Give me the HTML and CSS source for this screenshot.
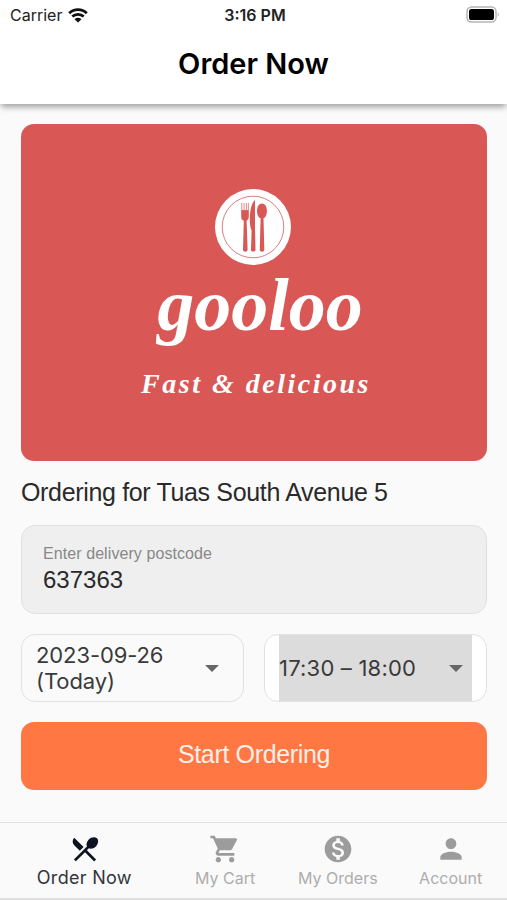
FILE: index.html
```html
<!DOCTYPE html>
<html lang="en">
<head>
    <meta charset="UTF-8">
    <meta name="viewport" content="width=device-width, initial-scale=1.0">
    <title>Order Now</title>
    <link rel="stylesheet" href="styles.css">
</head>
<body>
    <header class="header">
        <div class="status-bar">
            <div class="carrier">
                <span>Carrier</span>
                <svg class="wifi" viewBox="0 0 20 15" width="20" height="15">
                    <path d="M1.2 5.3a12.6 12.6 0 0 1 17.6 0M4.3 8.6a8.2 8.2 0 0 1 11.4 0" fill="none" stroke="#111" stroke-width="2.8"/>
                    <path d="M10 14.6 6.5 11.2a5 5 0 0 1 7 0z" fill="#111"/>
                </svg>
            </div>
            <div class="time">3:16 PM</div>
            <svg class="battery" viewBox="0 0 34 17" width="34" height="17">
                <rect x="1" y="1" width="29" height="15" rx="4.5" fill="#fff" stroke="#b5b5b5" stroke-width="1.5"/>
                <rect x="3" y="3" width="25" height="11" rx="2.6" fill="#000"/>
                <path d="M31.7 6.5v4.2c1.6-.7 1.6-3.5 0-4.2z" fill="#b5b5b5"/>
            </svg>
        </div>
        <h1>Order Now</h1>
    </header>

    <main class="content">
        <div class="banner">
            <svg class="plate" viewBox="0 0 76 76" width="76" height="76">
                <circle cx="38" cy="38" r="38" fill="#fff"/>
                <circle cx="38" cy="38" r="30.8" fill="none" stroke="#da8080" stroke-width="1"/>
                <g fill="#d95755">
                    <path d="M26.2 21h7.600v6.500c0 2.200-1 3.500-2.200 4.300l1 29c0 2.500-4.600 2.500-4.600 0l.8-29c-2.200-.8-2.600-2.100-2.600-4.300z"/>
                    <path d="M40 11v29l.5 21c0 2-4.500 2-4.500 0l.6-19.500C33.500 34 34.500 15 40 11z"/>
                    <path d="M47 14.500c6.200 0 6.500 13 1.500 14.800l.8 31.500c0 2.500-4.500 2.500-4.500 0l.8-31.500c-5-1.800-4.800-14.800 1.400-14.800z"/>
                </g>
                <path d="M26.800 14v8M29.100 14v8M31.400 14v8M33.400 14v8" stroke="#df7e7c" stroke-width=".9"/>
            </svg>
            <div class="brand">gooloo</div>
            <div class="tagline">Fast &amp; delicious</div>
        </div>

        <h2>Ordering for Tuas South Avenue 5</h2>

        <div class="postcode">
            <div class="postcode-label">Enter delivery postcode</div>
            <div class="postcode-value">637363</div>
        </div>

        <div class="selects">
            <div class="select">
                <div class="select-inner">
                    <span class="date">2023-09-26<br>(Today)</span>
                    <span class="arrow"></span>
                </div>
            </div>
            <div class="select select-time">
                <div class="select-inner">
                    <span class="slot">17:30 – 18:00</span>
                    <span class="arrow"></span>
                </div>
            </div>
        </div>

        <button class="btn">Start Ordering</button>
    </main>

    <nav class="tabs">
        <div class="tab active">
            <svg viewBox="0 0 24 24" width="32" height="32"><path d="M8.100 13.340l2.830-2.830L3.910 3.500c-1.560 1.560-1.560 4.090 0 5.660l4.190 4.180zm6.780-1.810c1.530.71 3.680.21 5.270-1.380 1.910-1.910 2.280-4.650.81-6.120-1.460-1.460-4.200-1.100-6.120.81-1.590 1.590-2.090 3.740-1.380 5.270L3.700 19.870l1.410 1.410L12 14.410l6.880 6.880 1.410-1.410L13.410 13l1.470-1.470z"/></svg>
            <span>Order Now</span>
        </div>
        <div class="tab cart">
            <svg viewBox="0 0 24 24" width="32" height="32"><path d="M7 18c-1.100 0-1.990.9-1.990 2S5.900 22 7 22s2-.9 2-2-.9-2-2-2zM1 2v2h2l3.600 7.590-1.350 2.450c-.16.28-.25.61-.25.96 0 1.100.9 2 2 2h12v-2H7.420c-.14 0-.25-.11-.25-.25l.03-.12.900-1.630h7.450c.75 0 1.410-.41 1.750-1.030l3.580-6.490c.08-.14.12-.31.12-.48 0-.55-.45-1-1-1H5.210l-.94-2H1zm16 16c-1.100 0-1.990.9-1.990 2s.89 2 1.990 2 2-.9 2-2-.9-2-2-2z"/></svg>
            <span>My Cart</span>
        </div>
        <div class="tab orders">
            <svg viewBox="0 0 24 24" width="32" height="32"><path d="M12 2C6.480 2 2 6.480 2 12s4.480 10 10 10 10-4.480 10-10S17.520 2 12 2zm1.410 16.090V20h-2.670v-1.930c-1.710-.36-3.160-1.460-3.270-3.400h1.960c.1 1.050.82 1.870 2.650 1.870 1.960 0 2.400-.98 2.400-1.590 0-.83-.44-1.610-2.670-2.140-2.480-.6-4.180-1.620-4.180-3.670 0-1.720 1.390-2.840 3.110-3.210V4h2.670v1.950c1.860.45 2.790 1.860 2.850 3.390H14.300c-.05-1.110-.64-1.870-2.220-1.870-1.500 0-2.400.68-2.400 1.640 0 .84.65 1.390 2.670 1.910s4.180 1.390 4.180 3.910c-.01 1.830-1.380 2.830-3.120 3.160z"/></svg>
            <span>My Orders</span>
        </div>
        <div class="tab account">
            <svg viewBox="0 0 24 24" width="32" height="32"><path d="M12 12c2.210 0 4-1.790 4-4s-1.790-4-4-4-4 1.790-4 4 1.790 4 4 4zm0 2c-2.670 0-8 1.340-8 4v2h16v-2c0-2.660-5.330-4-8-4z"/></svg>
            <span>Account</span>
        </div>
    </nav>
</body>
</html>
```

FILE: styles.css
```css
* {
    box-sizing: border-box;
}

body {
    width: 507px;
    height: 900px;
    margin: 0;
    display: flex;
    flex-direction: column;
    overflow: hidden;
    background: #fafafa;
    color: #2a2a2a;
    font-family: "Liberation Sans", Arial, sans-serif;
}

.header {
    height: 104px;
    background: #ffffff;
    box-shadow: 0 4px 6px -1px rgba(0, 0, 0, 0.36);
}

.status-bar {
    height: 30px;
    padding: 0 7px 0 10px;
    display: grid;
    grid-template-columns: 1fr auto 1fr;
    align-items: center;
    font-family: Inter, sans-serif;
    font-size: 16px;
    color: #222222;
}

.carrier {
    display: flex;
    align-items: center;
    gap: 6px;
}

.time {
    font-weight: 600;
    font-size: 16px;
}

.battery {
    justify-self: end;
    margin-bottom: 2px;
}

.header h1 {
    margin: 16px 0 0;
    font-family: Inter, sans-serif;
    font-weight: 600;
    font-size: 29px;
    line-height: 36px;
    text-align: center;
    color: #000000;
}

.content {
    flex: 1;
    padding: 20px 20px 0 21px;
}

.banner {
    height: 337px;
    padding-top: 65px;
    display: flex;
    flex-direction: column;
    align-items: center;
    border-radius: 13px;
    background: #d95755;
    color: #ffffff;
    font-family: "Liberation Serif", serif;
    font-style: italic;
    font-weight: bold;
}

.plate {
    flex: none;
    margin-right: 2px;
}

.brand {
    padding-left: 12px;
    font-size: 74px;
    line-height: 80px;
}

.tagline {
    margin-top: 19px;
    padding-left: 4px;
    font-size: 28px;
    line-height: 40px;
    letter-spacing: 2.5px;
}

.content h2 {
    margin: 16px 0 0;
    font-size: 25px;
    line-height: 30px;
    font-weight: normal;
    letter-spacing: -0.34px;
}

.postcode {
    height: 89px;
    margin-top: 18px;
    padding: 17px 21px;
    border: 1px solid #e0e0e0;
    border-radius: 14px;
    background: #efefef;
}

.postcode-label {
    font-size: 16px;
    line-height: 22px;
    letter-spacing: 0.08px;
    color: #888888;
}

.postcode-value {
    font-size: 24px;
    line-height: 29px;
}

.selects {
    display: flex;
    gap: 20px;
    margin-top: 20px;
}

.select {
    width: 223px;
    height: 68px;
    padding: 0 15px 0 14px;
    border: 1px solid #e2e2e2;
    border-radius: 14px;
    font-family: Inter, sans-serif;
    font-size: 22px;
    line-height: 26px;
    color: #3a3a3a;
}

.date {
    letter-spacing: -0.1px;
}

.slot {
    letter-spacing: 0.2px;
}

.select-time {
    background: #ffffff;
    padding: 0 14px;
}

.select-inner {
    height: 100%;
    display: flex;
    align-items: center;
    justify-content: space-between;
    padding-right: 9px;
}

.select-time .select-inner {
    background: #dcdcdc;
}

.arrow {
    border: 7px solid transparent;
    border-top-color: #666666;
    border-bottom: 0;
}

.btn {
    display: block;
    width: 100%;
    height: 68px;
    margin-top: 20px;
    padding: 0 0 3px;
    border: none;
    border-radius: 13px;
    background: #ff7843;
    color: #ffefe8;
    font-family: inherit;
    font-size: 25px;
    letter-spacing: -0.35px;
}

.tabs {
    height: 78px;
    display: flex;
    border-top: 1px solid #e0e0e0;
    border-bottom: 2px solid #e0e0e0;
    font-family: Inter, sans-serif;
    font-size: 16px;
    color: #adadad;
}

.tab {
    width: 113px;
    padding-top: 10px;
    display: flex;
    flex-direction: column;
    align-items: center;
    line-height: 26px;
}

.tab svg {
    fill: #9c9c9c;
}

.active {
    width: 169px;
    font-size: 18px;
    line-height: 25px;
    letter-spacing: 0.3px;
    color: #33343a;
}

.active svg {
    fill: #0c1220;
    margin-left: 2px;
}
```
